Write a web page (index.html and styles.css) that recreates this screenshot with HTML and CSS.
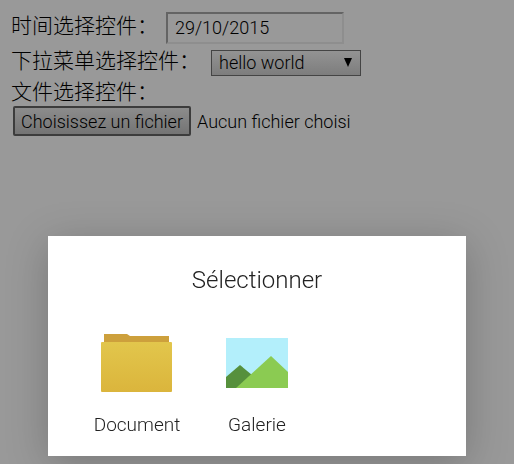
FILE: index.html
```html
<!DOCTYPE html>
<html lang="zh-CN">
<head>
    <meta charset="UTF-8">
    <meta name="viewport" content="width=device-width, initial-scale=1.0">
    <title>选择控件</title>
    <link rel="stylesheet" href="styles.css">
</head>
<body>

    <form class="controls">
        <div class="row row-date">
            <label for="date">时间选择控件：</label>
            <input class="date" id="date" type="text" value="29/10/2015">
        </div>
        <div class="row row-menu">
            <label for="menu">下拉菜单选择控件：</label>
            <div class="select">
                <select id="menu">
                    <option>hello world</option>
                </select>
                <svg class="arrow" viewBox="0 0 8 9"><path d="M0 0h8L4 9z"/></svg>
            </div>
        </div>
        <div class="row row-title">
            <label for="choose">文件选择控件：</label>
        </div>
        <div class="row row-file">
            <button class="choose" id="choose" type="button">Choisissez un fichier</button>
            <span class="file-name">Aucun fichier choisi</span>
        </div>
    </form>

    <div class="dialog" role="dialog" aria-labelledby="dialog-title" lang="fr">
        <h2 id="dialog-title">Sélectionner</h2>
        <div class="apps">
            <button class="app" type="button">
                <svg class="icon" width="72" height="60" viewBox="0 0 72 60">
                    <defs>
                        <linearGradient id="folder" x1="0" y1="0" x2="0" y2="1">
                            <stop offset="0" stop-color="#e2c64c"/>
                            <stop offset="1" stop-color="#dbb53c"/>
                        </linearGradient>
                    </defs>
                    <path d="M3 1h23l3 2h39v10H3z" fill="#cda03c"/>
                    <rect x="0" y="9" width="71" height="50" rx="1" fill="url(#folder)"/>
                </svg>
                Document
            </button>
            <button class="app" type="button">
                <svg class="icon" width="72" height="60" viewBox="0 0 72 60">
                    <path d="M5 5h62v50H5z" fill="#b3effb"/>
                    <path d="M5 44l14-12 12 10-12 13H5z" fill="#56903c"/>
                    <path d="M15 55l35-32 17 16v16z" fill="#8bcb52"/>
                </svg>
                Galerie
            </button>
        </div>
    </div>

</body>
</html>
```

FILE: styles.css
```css
body {
    margin: 0;
    min-height: 100vh;
    background: #999;
    border-right: 1px solid #fff;
    box-sizing: border-box;
    font-family: Roboto, "Noto Sans CJK SC", sans-serif;
    font-weight: 300;
    font-size: 18px;
    color: #000;
}
input, select, button {
    font: inherit;
    color: inherit;
    margin: 0;
    box-sizing: border-box;
}
.controls {
    padding: 12px 11px;
}
.row {
    display: flex;
    align-items: center;
}
.row label {
    font-size: 21px;
    line-height: 28px;
    white-space: nowrap;
}
.row-date {
    align-items: flex-start;
    gap: 8px;
    height: 32px;
}
.row-menu {
    gap: 11px;
    height: 34px;
}
.row-title {
    height: 28px;
}
.row-file {
    gap: 6px;
    padding-left: 2px;
}
.date {
    width: 178px;
    height: 32px;
    padding: 0 7px 2px;
    background: #999;
    border: 2px solid;
    border-color: #646464 #8e8e8e #8e8e8e #646464;
}
.select {
    position: relative;
    margin-top: 4px;
}
.select select {
    display: block;
    width: 150px;
    height: 26px;
    padding: 0 7px 2px;
    appearance: none;
    background: linear-gradient(#939393, #7d7d7d);
    border: 1px solid #444;
    border-radius: 0;
}
.arrow {
    position: absolute;
    top: 8px;
    right: 9px;
    width: 8px;
    height: 9px;
    pointer-events: none;
}
.choose {
    width: 178px;
    height: 30px;
    padding: 0;
    background: linear-gradient(#8c8c8c, #747474);
    border: 2px solid #3c3c3c;
    border-radius: 2px;
}
.dialog {
    position: fixed;
    left: 48px;
    right: 49px;
    bottom: 8px;
    padding: 28px 37px 19px;
    box-sizing: border-box;
    background: #fff;
    box-shadow: 0 8px 40px rgba(0, 0, 0, 0.22);
    color: #222;
}
.dialog h2 {
    margin: 0 0 37px;
    font-size: 24px;
    line-height: 32px;
    font-weight: 300;
    text-align: center;
}
.apps {
    display: flex;
    gap: 16px;
}
.app {
    display: flex;
    flex-direction: column;
    align-items: center;
    gap: 20px;
    width: 104px;
    padding: 0;
    background: none;
    border: none;
    font-size: 19px;
    line-height: 24px;
}
```
